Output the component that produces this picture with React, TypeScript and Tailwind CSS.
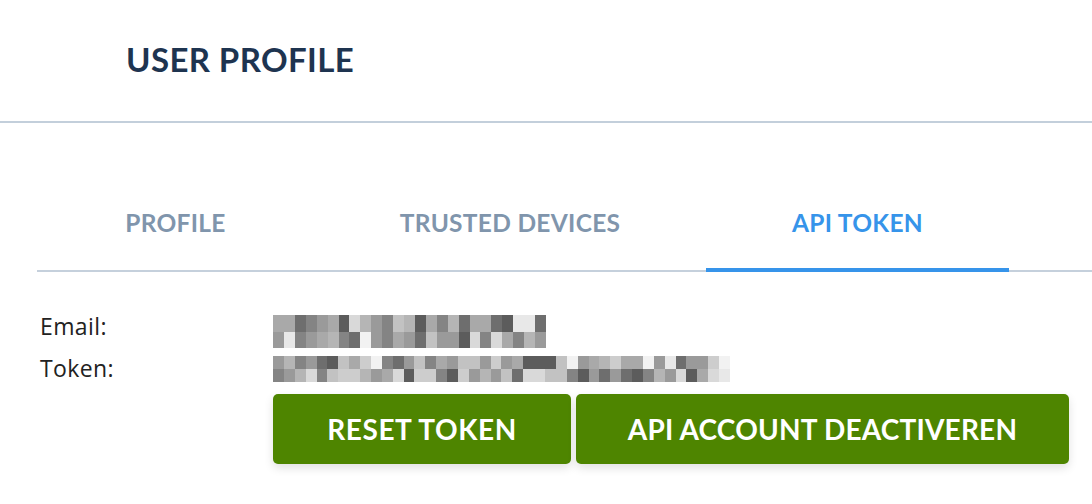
import React from 'react';

// deterministic grey "pixelated" blocks to mimic the blurred values
function makeBlocks(cols: number, rows: number, seed: number) {
  let s = seed;
  const rand = () => {
    s = (s * 9301 + 49297) % 233280;
    return s / 233280;
  };
  const palette = ['#5c5c5c', '#6e6e6e', '#848484', '#9a9a9a', '#a9a9a9', '#b5b5b5', '#c2c2c2', '#cdcdcd', '#d9d9d9', '#e8e8e8', '#f2f2f2'];
  const out: string[][] = [];
  for (let r = 0; r < rows; r++) {
    const row: string[] = [];
    for (let c = 0; c < cols; c++) {
      const v = rand();
      const idx = v < 0.08 ? 0 : v < 0.18 ? 1 : v < 0.3 ? 2 : v < 0.45 ? 3 : v < 0.58 ? 4 : v < 0.7 ? 5 : v < 0.8 ? 6 : v < 0.87 ? 7 : v < 0.93 ? 8 : v < 0.97 ? 9 : 10;
      row.push(palette[idx]);
    }
    out.push(row);
  }
  return out;
}

function Pixelated({ cols, rows, cell, rowH, seed }: { cols: number; rows: number; cell: number; rowH: number[]; seed: number }) {
  const blocks = makeBlocks(cols, rows, seed);
  let y = 0;
  const total = rowH.reduce((a, b) => a + b, 0);
  return (
    <svg width={cols * cell} height={total} className="block" shapeRendering="crispEdges">
      {blocks.map((row, r) => {
        const top = y;
        y += rowH[r];
        return row.map((fill, c) => (
          <rect key={`${r}-${c}`} x={c * cell} y={top} width={cell + 0.5} height={rowH[r]} fill={fill} />
        ));
      })}
    </svg>
  );
}

const tabs = [
  { label: 'Profile', w: 'w-[277px]' },
  { label: 'Trusted Devices', w: 'w-[392px]' },
  { label: 'API Token', w: 'w-[303px]' },
];

export default function App() {
  const font = { fontFamily: 'Lato, "Noto Sans", sans-serif' };

  return (
    <div className="w-[1092px] h-[504px] bg-white overflow-hidden" style={font}>
      {/* Header */}
      <div className="h-[123px] border-b-2 border-[#c3cfdb] pl-[126px] pt-[37px]">
        <h1 className="text-[33px] font-bold text-[#1e3450] uppercase tracking-[0.4px] leading-[44px]">User Profile</h1>
      </div>

      {/* Tabs */}
      <div className="ml-[37px] mt-[84px] flex border-b-2 border-[#c5d0dc]">
        {tabs.map((tab, i) => (
          <div
            key={tab.label}
            className={`relative ${tab.w} text-center pb-[31px] text-[24.5px] font-bold uppercase tracking-[0.3px] leading-[32px] ${
              i === 2 ? 'text-[#3694ea]' : 'text-[#8095ac]'
            }`}
          >
            {tab.label}
            {i === 2 && <div className="absolute left-0 right-0 -bottom-[2px] h-[4px] bg-[#3694ea]" />}
          </div>
        ))}
      </div>

      {/* Details */}
      <div className="pl-[40px] pt-[43px] text-[23px] text-[#222222] tracking-[0.4px]" style={{ fontFamily: '"Open Sans", sans-serif' }}>
        <div className="flex items-center h-[33px]">
          <span className="w-[233px] leading-[26px] -mt-[12px]">Email:</span>
          <Pixelated cols={25} rows={2} cell={10.92} rowH={[17, 16]} seed={7} />
        </div>
        <div className="flex items-center h-[34px] mt-[4px]">
          <span className="w-[233px] leading-[26px] -mt-[2px]">Token:</span>
          <Pixelated cols={42} rows={2} cell={10.88} rowH={[13, 13]} seed={31} />
        </div>
      </div>

      <div className="pl-[273px] mt-[8px] flex gap-[5px]">
        <button className="w-[298px] h-[70px] rounded-[5px] bg-[#4e8500] text-white text-[28px] font-bold uppercase tracking-[0.6px] shadow-[0_4px_10px_rgba(0,0,0,0.12)]">
          Reset Token
        </button>
        <button className="w-[493px] h-[70px] rounded-[5px] bg-[#4e8500] text-white text-[28px] font-bold uppercase tracking-[0.2px] shadow-[0_4px_10px_rgba(0,0,0,0.12)]">
          API Account deactiveren
        </button>
      </div>
    </div>
  );
}
